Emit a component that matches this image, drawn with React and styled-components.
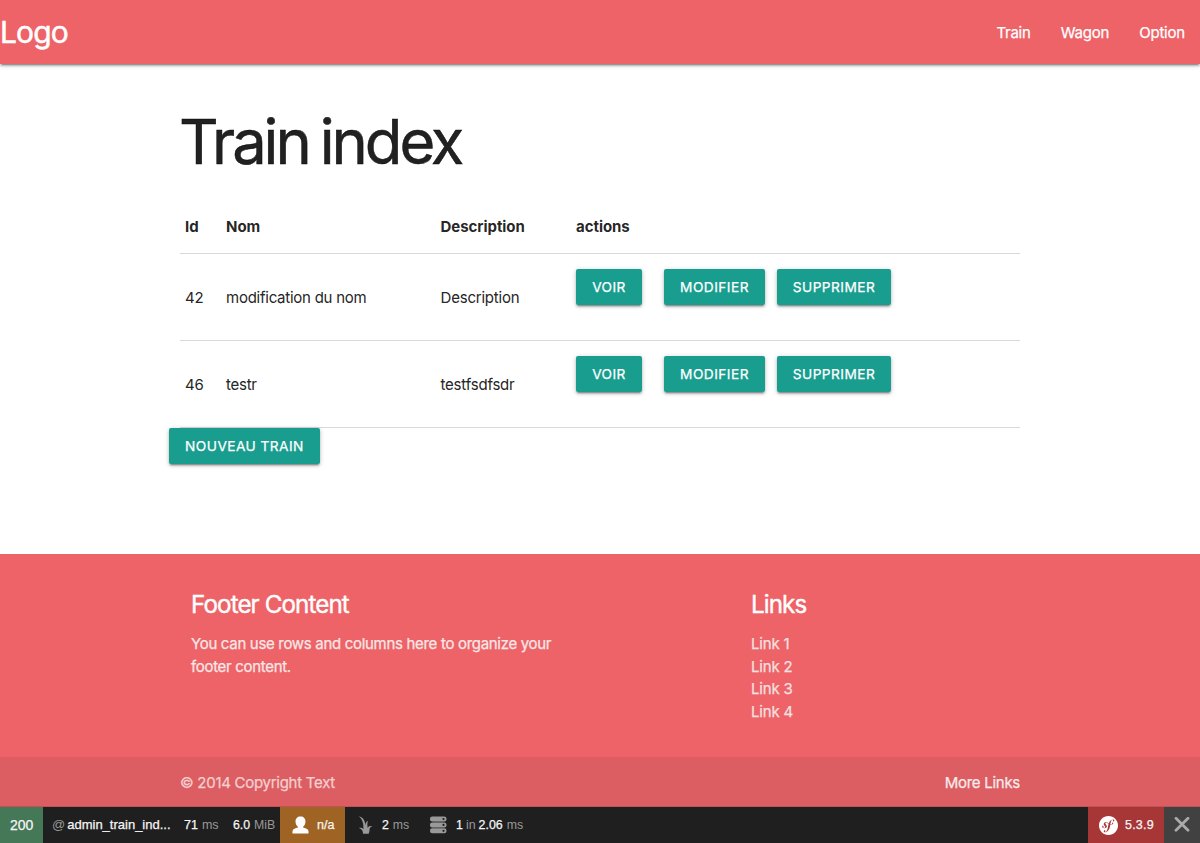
import React from "react";
import styled, { createGlobalStyle } from "styled-components";
import { SiSymfony } from "react-icons/si";

const GlobalStyle = createGlobalStyle`
  *, *::before, *::after { box-sizing: border-box; }
  body {
    margin: 0;
    background: #fff;
    color: rgba(0, 0, 0, 0.87);
    font: 400 15px/22.5px Inter, "Liberation Sans", sans-serif;
    overflow: hidden;
  }
  a { color: inherit; text-decoration: none; }
`;

const raised = `
  box-shadow: 0 2px 2px 0 rgba(0, 0, 0, 0.18), 0 3px 1px -2px rgba(0, 0, 0, 0.2),
    0 1px 5px 0 rgba(0, 0, 0, 0.22);
`;

const Page = styled.div`
  display: flex;
  flex-direction: column;
  height: 843px;
`;

const Nav = styled.nav`
  display: flex;
  flex: none;
  justify-content: space-between;
  height: 64px;
  line-height: 65px;
  color: #fff;
  background: #ee6367;
  -webkit-text-stroke: 0.25px currentColor;
  ${raised}
`;

const Brand = styled.a`
  font-size: 30px;
  letter-spacing: -0.85px;
  -webkit-text-stroke-width: 0.5px;
`;

const NavLinks = styled.div`
  display: flex;
`;

const NavLink = styled.a`
  padding: 0 15.2px 0 15px;
  letter-spacing: -0.25px;
`;

const Container = styled.div`
  width: 840px;
  margin: 0 auto;
`;

const Main = styled(Container)`
  flex: none;
  height: 490px;
  padding-top: 43px;
`;

const Title = styled.h1`
  margin: 0 0 24px -1px;
  font-size: 61.5px;
  font-weight: 400;
  line-height: 69.5px;
  letter-spacing: -3.1px;
  word-spacing: -3px;
  -webkit-text-stroke: 0.5px currentColor;
`;

const Table = styled.table`
  width: 100%;
  table-layout: fixed;
  border-collapse: collapse;
`;

const Row = styled.tr`
  height: ${(p) => (p.$head ? "53px" : "87px")};
  border-bottom: 1px solid rgba(0, 0, 0, 0.15);
`;

const HeadCell = styled.th`
  width: ${(p) => p.$width};
  padding: 0 5px;
  font-weight: 700;
  text-align: left;
  letter-spacing: -0.05px;
`;

const Cell = styled.td`
  padding: 2px 5px 0;
  letter-spacing: ${(p) => p.$track ?? -0.2}px;
  -webkit-text-stroke: 0.1px currentColor;
`;

const Actions = styled.div`
  display: flex;
  padding-bottom: 22px;
`;

const Button = styled.a`
  flex: none;
  width: ${(p) => p.$width}px;
  height: 36px;
  margin-right: ${(p) => p.$gap || 0}px;
  border-radius: 2px;
  color: #fff;
  background: #189d8f;
  font-size: 13.7px;
  line-height: 36px;
  letter-spacing: 0.45px;
  text-align: center;
  white-space: nowrap;
  -webkit-text-stroke: 0.25px currentColor;
  ${raised}
`;

const NewRow = styled.div`
  display: flex;
  margin: 0 -11px;
`;

const Footer = styled.footer`
  flex: none;
  height: 253px;
  color: #fff;
  background: #ee6367;
  -webkit-text-stroke: 0.25px currentColor;
`;

const FooterBody = styled(Container)`
  display: flex;
  height: 203px;
  padding: 37px 11px 0;
`;

const FooterColumn = styled.section`
  width: ${(p) => p.$width}px;
`;

const FooterTitle = styled.h5`
  margin: 0 0 15px;
  font-size: 24.2px;
  font-weight: 400;
  line-height: 27px;
  letter-spacing: -0.9px;
  -webkit-text-stroke-width: 0.4px;
`;

const FooterText = styled.p`
  width: 380px;
  margin: 0;
  color: #f8e7e7;
  letter-spacing: -0.31px;
`;

const LinkList = styled.ul`
  margin: 0;
  padding: 0;
  list-style: none;
  color: #f3e0e0;
  letter-spacing: -0.2px;
`;

const Copyright = styled.div`
  height: 50px;
  line-height: 51px;
  background: #dc5e62;
  border-bottom: 1px solid #c15357;
`;

const CopyrightRow = styled(Container)`
  display: flex;
  justify-content: space-between;
  color: #f5cfd0;
  letter-spacing: -0.28px;
`;

const MoreLinks = styled.a`
  color: #f9ebeb;
`;

const DebugBar = styled.div`
  display: flex;
  flex: none;
  height: 36px;
  color: #f5f5f5;
  background: #1f1f1f;
  font: 13px/36px "Liberation Sans", Arial, sans-serif;
  white-space: nowrap;
`;

const Panel = styled.div`
  display: flex;
  align-items: center;
  width: ${(p) => p.$width}px;
  padding-left: ${(p) => p.$pad}px;
  background: ${(p) => p.$bg || "transparent"};
  font-size: ${(p) => p.$size || 13}px;
  letter-spacing: ${(p) => p.$track || 0}px;
  -webkit-text-stroke: 0.25px currentColor;
  svg { flex: none; margin-right: ${(p) => p.$iconGap || 0}px; }
`;

const Muted = styled.span`
  color: #999;
  margin: ${(p) => p.$margin || "0"};
  -webkit-text-stroke: 0;
`;

const Spacer = styled.div`
  flex: 1;
`;

const UserIcon = () => (
  <svg width="17" height="19" viewBox="0 0 17 19" fill="#fff">
    <path d="M8.5 .5c3.200 0 5 2.100 5 5.100 0 2.200-.9 4-2.400 5.200v.7c2.400.7 4.900 1.300 5.300 3.200.2.900.2 1.600.1 2.800h-16c-.1-1.200-.1-1.900.1-2.800.4-1.900 2.900-2.500 5.300-3.200v-.7C4.400 9.600 3.500 7.800 3.500 5.600 3.500 2.600 5.300.5 8.500.5z" />
  </svg>
);

const TwigIcon = () => (
  <svg width="15" height="19" viewBox="0 0 15 19" fill="#999">
    <path d="M.8.2C5.200 1.200 7.100 4.700 7.400 9.500 7.600 7.100 8.300 5.600 10 5.100c-.8 1.700-.8 4-.3 6.900.9-2 2.500-2.800 5-1.400-2.200.1-3.200 1.500-3.200 3.500 0 1.200-.3 2.500-.8 3.600H5c.1-2.700-1-4.900-4-5.800 2-.3 3.400.2 4.400 1.300C5.800 7.900 4.600 3.200.8.200z" />
  </svg>
);

const DatabaseIcon = () => (
  <svg width="17" height="18" viewBox="0 0 17 18">
    <rect x="0" y=".5" width="16.500" height="5" rx="2.200" fill="#999" />
    <rect x="0" y="6.400" width="16.500" height="5" rx="2.200" fill="#999" />
    <rect x="0" y="12.300" width="16.500" height="5" rx="2.200" fill="#999" />
    <path d="M3 5.500h10.500v1H3zM3 11.400h10.500v1H3z" fill="#6c6c6c" />
    <circle cx="13.500" cy="3" r="1.100" fill="#1f1f1f" />
    <circle cx="13.500" cy="8.900" r="1.100" fill="#1f1f1f" />
    <circle cx="13.500" cy="14.800" r="1.100" fill="#1f1f1f" />
  </svg>
);

const CloseIcon = () => (
  <svg width="16" height="16" viewBox="0 0 16 16" stroke="#aaa" strokeWidth="2.800" strokeLinecap="round">
    <path d="M2 1.300l12 12M14 1.300L2 13.300" />
  </svg>
);

const trains = [
  { id: 42, name: "modification du nom", description: "Description" },
  { id: 46, name: "testr", description: "testfsdfsdr" },
];

export default function App() {
  return (
    <Page>
      <GlobalStyle />
      <Nav>
        <Brand>Logo</Brand>
        <NavLinks>
          <NavLink>Train</NavLink>
          <NavLink>Wagon</NavLink>
          <NavLink>Option</NavLink>
        </NavLinks>
      </Nav>
      <Main as="main">
        <Title>Train index</Title>
        <Table>
          <thead>
            <Row $head>
              <HeadCell $width="41px">Id</HeadCell>
              <HeadCell $width="214.5px">Nom</HeadCell>
              <HeadCell $width="135.5px">Description</HeadCell>
              <HeadCell>actions</HeadCell>
            </Row>
          </thead>
          <tbody>
            {trains.map((t) => (
              <Row key={t.id}>
                <Cell>{t.id}</Cell>
                <Cell $track={-0.25}>{t.name}</Cell>
                <Cell>{t.description}</Cell>
                <Cell>
                  <Actions>
                    <Button $width={66} $gap={22}>VOIR</Button>
                    <Button $width={101} $gap={12}>MODIFIER</Button>
                    <Button $width={114}>SUPPRIMER</Button>
                  </Actions>
                </Cell>
              </Row>
            ))}
          </tbody>
        </Table>
        <NewRow>
          <Button $width={151}>NOUVEAU TRAIN</Button>
        </NewRow>
      </Main>
      <Footer>
        <FooterBody>
          <FooterColumn $width={560}>
            <FooterTitle>Footer Content</FooterTitle>
            <FooterText>You can use rows and columns here to organize your footer content.</FooterText>
          </FooterColumn>
          <FooterColumn $width={240}>
            <FooterTitle>Links</FooterTitle>
            <LinkList>
              {[1, 2, 3, 4].map((n) => (
                <li key={n}><a>Link {n}</a></li>
              ))}
            </LinkList>
          </FooterColumn>
        </FooterBody>
        <Copyright>
          <CopyrightRow>
            <span>© 2014 Copyright Text</span>
            <MoreLinks>More Links</MoreLinks>
          </CopyrightRow>
        </Copyright>
      </Footer>
      <DebugBar>
        <Panel $width={43} $pad={10} $bg="#457857" $size={14}>200</Panel>
        <Panel $width={141} $pad={9}>
          <Muted $margin="0 2px 0 0">@</Muted>admin_train_ind...
        </Panel>
        <Panel $width={49} $pad={0} $size={12.5}>71<Muted $margin="0 0 0 4px">ms</Muted></Panel>
        <Panel $width={47} $pad={0} $size={12.3}>6.0<Muted $margin="0 0 0 4px">MiB</Muted></Panel>
        <Panel $width={65} $pad={12} $bg="#9f6423" $size={12.5} $iconGap={8}><UserIcon />n/a</Panel>
        <Panel $width={77} $pad={13} $size={12.3} $iconGap={9}>
          <TwigIcon />2<Muted $margin="0 0 0 4px">ms</Muted>
        </Panel>
        <Panel $width={120} $pad={8} $size={12.4} $iconGap={9}>
          <DatabaseIcon />1<Muted $margin="0 3px">in</Muted>2.06<Muted $margin="0 0 0 4px">ms</Muted>
        </Panel>
        <Spacer />
        <Panel $width={76} $pad={10.5} $bg="#a73737" $size={12.5} $track={0.2} $iconGap={7.5}>
          <SiSymfony size={19} color="#fff" />5.3.9
        </Panel>
        <Panel $width={36} $pad={10} $bg="#414141"><CloseIcon /></Panel>
      </DebugBar>
    </Page>
  );
}
